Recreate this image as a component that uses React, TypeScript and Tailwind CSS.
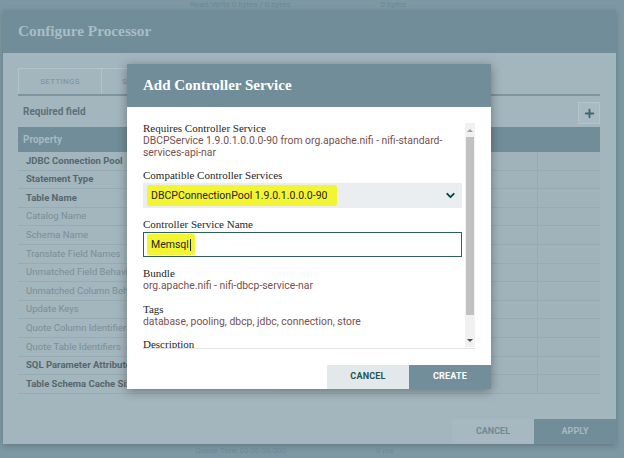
import React from "react";
import { ChevronDown, Plus } from "lucide-react";

const properties = [
  { name: "JDBC Connection Pool", req: true },
  { name: "Statement Type", req: true },
  { name: "Table Name", req: true },
  { name: "Catalog Name", req: false },
  { name: "Schema Name", req: false },
  { name: "Translate Field Names", req: false },
  { name: "Unmatched Field Behavior", req: false },
  { name: "Unmatched Column Behavior", req: false },
  { name: "Update Keys", req: false },
  { name: "Quote Column Identifiers", req: false },
  { name: "Quote Table Identifiers", req: false },
  { name: "SQL Parameter Attribute Prefix", req: true },
  { name: "Table Schema Cache Size", req: true },
];

const sans = "font-['Roboto','Liberation_Sans',sans-serif]";
const serif = "font-['Liberation_Serif','DejaVu_Serif',serif]";

const Label = ({ text, className = "" }: { text: string; className?: string }) => (
  <div className={`${serif} text-[11px] leading-[13px] text-[#262626] ${className}`}>{text}</div>
);

const Value = ({ text }: { text: string }) => (
  <div className={`${sans} text-[10.4px] leading-[12.5px] text-[#7a4f4e]`}>{text}</div>
);

const AddControllerService: React.FC = () => {
  return (
    <div className="absolute left-[127px] top-[64px] w-[364px] h-[325px] flex flex-col bg-white shadow-[0_2px_10px_rgba(0,0,0,0.35)]">
      <div className="h-[43px] bg-[#708d99] flex items-center px-[16px]">
        <span className={`${serif} font-bold text-[15px] text-white`}>Add Controller Service</span>
      </div>
      <div className="h-[242px] mx-[16px] flex border-b border-[#e2e2e2]">
        <div className="flex-1 overflow-hidden pt-[14.5px]">
          <Label text="Requires Controller Service" />
          <Value text="DBCPService 1.9.0.1.0.0.0-90 from org.apache.nifi - nifi-standard-" />
          <Value text="services-api-nar" />

          <Label text="Compatible Controller Services" className="mt-[9px]" />
          <div className="mt-[1.5px] h-[25px] bg-[#eaeef0] flex items-center justify-between pl-[4px] pr-[5px]">
            <span className={`${sans} text-[10.5px] text-[#262626] bg-[#f4f532] px-[4px] py-[3px] rounded-[2px] pr-[10px]`}>
              DBCPConnectionPool 1.9.0.1.0.0.0-90
            </span>
            <ChevronDown size={13} strokeWidth={3.5} className="text-[#004849]" />
          </div>

          <Label text="Controller Service Name" className="mt-[9.5px]" />
          <div className="mt-[1.5px] h-[25px] border border-[#2f5f60] flex items-center pl-[3px]">
            <span className={`${sans} text-[10.5px] text-[#262626] bg-[#f4f532] px-[4px] py-[3px] rounded-[2px] flex items-center`}>
              Memsql
              <span className="inline-block w-[1px] h-[12px] bg-[#262626] ml-[1px]" />
            </span>
          </div>

          <Label text="Bundle" className="mt-[9.5px]" />
          <Value text="org.apache.nifi - nifi-dbcp-service-nar" />

          <Label text="Tags" className="mt-[10.5px]" />
          <Value text="database, pooling, dbcp, jdbc, connection, store" />

          <Label text="Description" className="mt-[9.5px]" />
        </div>
        <div className="w-[10px] ml-[3px] mt-[16px] mb-[1px] bg-[#f1f1f1] flex flex-col">
          <div className="h-[14px] flex items-center justify-center">
            <div className="w-0 h-0 border-l-[3px] border-r-[3px] border-b-[3px] border-l-transparent border-r-transparent border-b-[#a3a3a3]" />
          </div>
          <div className="h-[178px] mx-[1px] bg-[#c1c1c1]" />
          <div className="flex-1" />
          <div className="h-[14px] flex items-center justify-center">
            <div className="w-0 h-0 border-l-[3px] border-r-[3px] border-t-[3px] border-l-transparent border-r-transparent border-t-[#505050]" />
          </div>
        </div>
      </div>
      <div className="h-[16px]" />
      <div className="h-[24px] flex justify-end">
        <button className={`${sans} w-[82px] h-full bg-[#e3e8eb] text-[#1f5556] text-[9px] font-bold tracking-[0.2px]`}>
          CANCEL
        </button>
        <button className={`${sans} w-[82px] h-full bg-[#728e9b] text-white text-[9px] font-bold tracking-[0.2px]`}>
          CREATE
        </button>
      </div>
    </div>
  );
};

const App: React.FC = () => {
  return (
    <div className={`relative w-[624px] h-[458px] overflow-hidden bg-[#7d98a3] flex flex-col ${sans}`}>
      <div className="h-[10px] flex items-center text-[8px] text-[#6c8893] leading-none">
        <span className="ml-[190px]">Read/Write 0 bytes / 0 bytes</span>
        <span className="ml-[90px]">0 bytes</span>
      </div>

      <div className="ml-[3px] w-[613px] h-[434px] flex flex-col shadow-[0_2px_6px_rgba(0,0,0,0.2)]">
        <div className="h-[43px] bg-[#708d99] flex items-center px-[15px]">
          <span className={`${serif} font-bold text-[15.3px] text-[#a9bdc5]`}>Configure Processor</span>
        </div>
        <div className="flex-1 bg-[#a3b5bd] flex flex-col">
          <div className="pl-[15px] pr-[16px] pt-[15px]">
            <div className="h-[28px] flex border-b-2 border-[#7c959f]">
              <div className="w-[84px] border border-b-0 border-[#b3c3c9] flex items-center justify-center text-[8px] text-[#7b929b] tracking-[0.3px]">
                SETTINGS
              </div>
              <div className="w-[25px] border-l-0 border-t border-[#b3c3c9] flex items-center justify-end overflow-hidden text-[8px] text-[#7b929b] tracking-[0.3px]">
                S
              </div>
            </div>
            <div className="h-[31px] flex items-center justify-between">
              <span className="ml-[5px] text-[10px] font-bold text-[#5f7078]">Required field</span>
              <div className="w-[22px] h-[22px] mt-[3px] bg-[#a9bbc2] border border-[#b4c4ca] flex items-center justify-center">
                <Plus size={13} strokeWidth={3.5} className="text-[#3d6a70]" />
              </div>
            </div>
            <div className="h-[25px] bg-[#708d99] flex items-center px-[5px]">
              <span className="text-[10px] font-bold text-[#a5bac2]">Property</span>
            </div>
            <div className="flex flex-col">
              {properties.map((p) => (
                <div key={p.name} className="h-[18.6px] grid grid-cols-[1fr_1fr_63px] border-b border-[#97abb3]">
                  <div className="flex items-center pl-[8px] overflow-hidden whitespace-nowrap">
                    <span className={p.req ? "text-[9.5px] font-bold text-[#56676e]" : "text-[9.5px] text-[#7a8f97]"}>
                      {p.name}
                    </span>
                  </div>
                  <div className="bg-[#a0b3bb]" />
                  <div className="bg-[#a0b3bb] border-l border-[#97abb3]" />
                </div>
              ))}
            </div>
          </div>
          <div className="mt-auto flex justify-end">
            <button className="w-[82px] h-[25px] bg-[#a7b8c0] text-[#6f8a93] text-[9px] font-bold">CANCEL</button>
            <button className="w-[82px] h-[25px] bg-[#708d99] text-[#a5bac2] text-[9px] font-bold">APPLY</button>
          </div>
        </div>
      </div>

      <div className="flex-1 flex items-center text-[8px] text-[#6c8893] leading-none">
        <span className="ml-[195px]">Queue Time 00:00:00.000</span>
        <span className="ml-[90px]">0 ms</span>
      </div>

      <AddControllerService />
    </div>
  );
};

export default App;
